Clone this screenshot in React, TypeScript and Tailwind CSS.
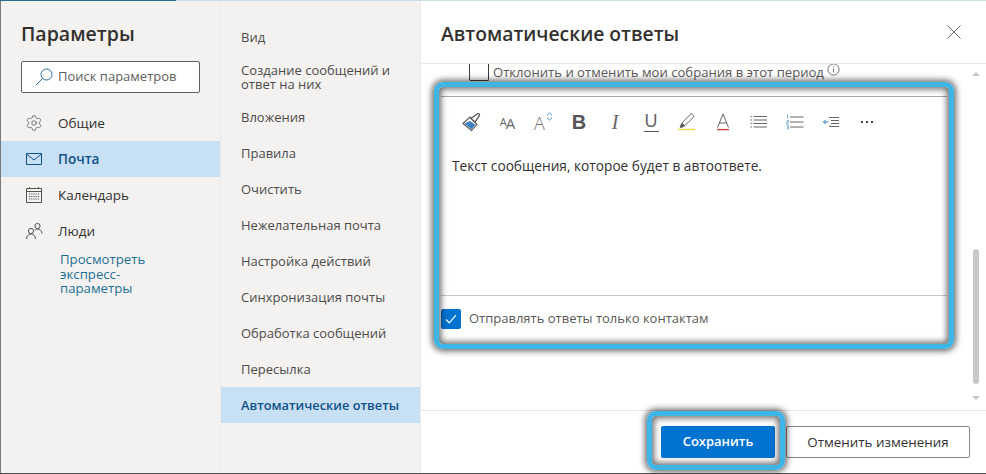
import React from "react";
import { Settings } from "lucide-react";

const F = "font-['Open_Sans','Noto_Sans',sans-serif]";

function Tool({ children }: { children: React.ReactNode }) {
  return <div className="w-[36px] h-[36px] flex items-center justify-center shrink-0">{children}</div>;
}

const subItems = [
  "Вид",
  "Создание сообщений и ответ на них",
  "Вложения",
  "Правила",
  "Очистить",
  "Нежелательная почта",
  "Настройка действий",
  "Синхронизация почты",
  "Обработка сообщений",
  "Пересылка",
  "Автоматические ответы",
];

export default function App() {
  return (
    <div className={`${F} relative w-[986px] h-[474px] overflow-hidden flex flex-col bg-white text-[#323130]`}>
      <div className="flex h-[1px] shrink-0">
        <div className="w-[176px] bg-[#1f6f8f]" />
        <div className="flex-1 bg-[#c9dbe3]" />
      </div>
      <div className="flex flex-1 min-h-0 border-l border-[#77797b]">
        {/* Left nav */}
        <div className="w-[219px] shrink-0 bg-[#f3f2f1] flex flex-col">
          <div className="h-[104px] shrink-0 px-[20px]">
            <div className="text-[19.5px] font-semibold leading-[28px] pt-[19px] h-[60px] text-[#323130]">Параметры</div>
            <div className="w-[179px] h-[32px] bg-white border border-[#605e5c] rounded-[2px] flex items-center pl-[13px] gap-[5px]">
              <svg width="18" height="18" viewBox="0 0 18 18" fill="none" stroke="#2a6f9b" strokeWidth="1">
                <circle cx="11.500" cy="6.500" r="5.500" />
                <path d="M7.500 10.500 1 17" />
              </svg>
              <span className="text-[13px] text-[#605e5c]">Поиск параметров</span>
            </div>
          </div>
          <div className="h-[36px] flex items-center pl-[24px] gap-[15px]">
            <Settings size={18} strokeWidth={1} className="text-[#55534f]" />
            <span className="text-[13.5px]">Общие</span>
          </div>
          <div className="h-[36px] flex items-center pl-[24px] gap-[15px] bg-[#c7e0f4] text-[#11508a]">
            <svg width="18" height="18" viewBox="0 0 18 18" fill="none" stroke="currentColor" strokeWidth="1">
              <path d="M1.500 3.500h15v11h-15zM1.500 4l7.500 6 7.500-6" />
            </svg>
            <span className="text-[13.5px] font-semibold">Почта</span>
          </div>
          <div className="h-[36px] flex items-center pl-[24px] gap-[15px]">
            <svg width="18" height="18" viewBox="0 0 18 18" fill="none" stroke="#55534f" strokeWidth="1">
              <path d="M1.500 2.500h15v14h-15zM1.500 5.500h15" />
              <path d="M4.500 1v2M13.500 1v2" />
              <path d="M4 8h10M4 10.500h10M4 13h10" strokeDasharray="1.200 1" />
            </svg>
            <span className="text-[13.5px]">Календарь</span>
          </div>
          <div className="h-[36px] flex items-center pl-[24px] gap-[15px]">
            <svg width="18" height="18" viewBox="0 0 18 18" fill="none" stroke="#55534f" strokeWidth="1">
              <circle cx="6" cy="9" r="2.600" />
              <path d="M1.500 17c0-3 2-5 4.500-5s4.500 2 4.500 5" />
              <circle cx="12.500" cy="4" r="2.600" />
              <path d="M10 8.500c.7-1 1.500-1.500 2.500-1.500 2.500 0 4.500 2 4.500 4.500" />
            </svg>
            <span className="text-[13.5px]">Люди</span>
          </div>
          <div className="pl-[59px] text-[13.2px] leading-[14.5px] text-[#1c6f92] pt-[3px]">
            Просмотреть<br />экспресс-<br />параметры
          </div>
        </div>

        {/* Sub nav */}
        <div className="w-[201px] shrink-0 bg-[#f3f2f1] border-l border-[#ebeae9] border-r flex flex-col pt-[18px]">
          {subItems.map((t, i) =>
            i === 1 ? (
              <div key={t} className="h-[44px] px-[20px] text-[13px] leading-[14.5px] flex items-center text-[#4d4b49]">
                <span>Создание сообщений и<br />ответ на них</span>
              </div>
            ) : (
              <div
                key={t}
                className={`h-[36px] px-[20px] pt-[1px] flex items-center whitespace-nowrap ${
                  i === 10 ? "bg-[#c7e0f4] text-[#11508a] font-semibold text-[12.8px]" : "text-[#4d4b49] text-[13px]"
                }`}
              >
                {t}
              </div>
            )
          )}
        </div>

        {/* Right pane */}
        <div className="flex-1 min-w-0 flex flex-col bg-white">
          <div className="h-[63px] shrink-0 border-b border-[#e6e6e6] flex items-start justify-between pl-[20px] pr-[25px]">
            <div className="text-[19.3px] font-semibold leading-[28px] pt-[19px] text-[#323130]">Автоматические ответы</div>
            <svg width="14" height="14" viewBox="0 0 14 14" className="mt-[24px]" fill="none" stroke="#666" strokeWidth="1">
              <path d="M.5.5l13 13M13.500.5l-13 13" />
            </svg>
          </div>

          <div className="flex-1 min-h-0 flex overflow-hidden">
            <div className="flex-1 min-w-0 flex flex-col">
              <div className="h-[32px] shrink-0 flex items-start pl-[48px]">
                <div className="w-[20px] h-[17px] border-x border-b border-[#3a3a3a] rounded-b-[2px]" />
                <span className="text-[13.100px] leading-[16px] ml-[4px] text-[#5b5957]">Отклонить и отменить мои собрания в этот период</span>
                <svg width="13" height="13" viewBox="0 0 13 13" className="ml-[3px] -mt-[1px] text-[#666]" fill="none" stroke="currentColor" strokeWidth="0.9">
                  <circle cx="6.500" cy="6.500" r="5.600" />
                  <path d="M6.500 5.500v4M6.500 3.200v1" />
                </svg>
              </div>
              <div className="ml-[20px] w-[506px] h-[199px] shrink-0 border-t border-[#a6a6a6] flex flex-col">
                <div className="h-[48px] pl-[12px] flex items-center mt-[1px] shrink-0">
                  <Tool>
                    <svg width="20" height="20" viewBox="0 0 20 20" fill="none" className="translate-x-[1px]">
                      <path d="M1 11.500 8 5l7 7.500-5.500 6z" fill="#fff" stroke="#55534f" strokeWidth="1.100" />
                      <path d="M2.500 11.500 8 9l5.500 3.800-4 4.400z" fill="#3f7fbe" />
                      <path d="M9 6.500 15.500 1.800c1-.7 2.500.7 1.900 1.800L13 10z" fill="#fff" stroke="#55534f" strokeWidth="1.200" />
                    </svg>
                  </Tool>
                  <Tool>
                    <span className="text-[#666] text-[15px] leading-none relative top-[1px] tracking-[-1px]"><span className="text-[11px] relative -top-[3px]">A</span>A</span>
                  </Tool>
                  <Tool>
                    <div className="relative w-[20px] h-[20px]">
                      <span className="absolute left-[1px] top-0 text-[#777] text-[18px] leading-[22px] font-light">A</span>
                      <svg width="7" height="9" viewBox="0 0 7 9" className="absolute right-0 top-0" fill="none" stroke="#3a86c8" strokeWidth="0.9">
                        <path d="M1 3.200 3.500 1 6 3.200M1 5.800 3.500 8 6 5.800" />
                      </svg>
                    </div>
                  </Tool>
                  <Tool>
                    <span className="font-['Liberation_Sans',sans-serif] font-bold text-[20px] leading-none text-[#555]">B</span>
                  </Tool>
                  <Tool>
                    <span className="font-['Liberation_Serif',serif] italic text-[20px] leading-none text-[#666]">I</span>
                  </Tool>
                  <Tool>
                    <span className="font-['Liberation_Sans',sans-serif] text-[18px] leading-[19px] text-[#666] border-b border-[#555] px-[1px]">U</span>
                  </Tool>
                  <Tool>
                    <svg width="20" height="20" viewBox="0 0 20 20" fill="none">
                      <path d="M3 15 5 11 13 2.500c.8-.8 2-.8 3 .2s.9 2 .2 2.800L8 13.500 4.500 15.500z" stroke="#666" strokeWidth="1" fill="#fff" />
                      <path d="M3 15.500 5 11l3 2.500-3.500 2z" fill="#555" />
                      <path d="M1 17.500h17" stroke="#f0d858" strokeWidth="1.500" />
                    </svg>
                  </Tool>
                  <Tool>
                    <svg width="20" height="20" viewBox="0 0 20 20" fill="none">
                      <path d="M4.500 15.500 10 2l5.500 13.500M6.300 11h7.400" stroke="#666" strokeWidth="1" />
                      <path d="M4 17.600h12" stroke="#c8453a" strokeWidth="1.400" />
                    </svg>
                  </Tool>
                  <Tool>
                    <svg width="18" height="16" viewBox="0 0 18 16" fill="none" stroke="#666" strokeWidth="1">
                      <path d="M3.500 2.500h13.500M3.500 6h13.500M3.500 9.500h13.500M3.500 13h13.500" />
                      <path d="M.5 2.500h1.400M.5 6h1.400M.5 9.500h1.400M.5 13h1.400" />
                    </svg>
                  </Tool>
                  <Tool>
                    <svg width="18" height="16" viewBox="0 0 18 16" fill="none" stroke="#666" strokeWidth="1">
                      <path d="M4 3h13.500M4 8h13.500M4 13h13.500" />
                      <path d="M1.500 .8v3.800M.6 6.600h1.800v1.600H.6v1.400h1.800M.6 11.200h1.800v3.600H.6M.8 13h1.600" stroke="#5c9bc9" strokeWidth="0.8" />
                    </svg>
                  </Tool>
                  <Tool>
                    <svg width="18" height="14" viewBox="0 0 18 14" fill="none" strokeWidth="1">
                      <path d="M7 2.500h10M9 5.500H17M9 8.500H17M7 11.500H17" stroke="#666" />
                      <path d="M6.500 7H1.500M3.500 5 1.500 7l2 2" stroke="#2b7cbd" />
                    </svg>
                  </Tool>
                  <Tool>
                    <div className="flex gap-[3px]">
                      <div className="w-[2px] h-[2px] bg-[#444]" />
                      <div className="w-[2px] h-[2px] bg-[#444]" />
                      <div className="w-[2px] h-[2px] bg-[#444]" />
                    </div>
                  </Tool>
                </div>
                <div className="flex-1 pl-[11px] pt-[10px] text-[13.700px] leading-[20px] text-[#323130]">
                  Текст сообщения, которое будет в автоответе.
                </div>
              </div>
              <div className="ml-[20px] w-[506px] border-t border-[#c8c8c8] shrink-0 pt-[13px] flex items-center">
                <div className="w-[20px] h-[20px] rounded-[2px] bg-[#0072d0] flex items-center justify-center">
                  <svg width="12" height="10" viewBox="0 0 12 10" fill="none" stroke="#fff" strokeWidth="1.200">
                    <path d="M1 5.500 4.300 8.800 11 1.200" />
                  </svg>
                </div>
                <span className="ml-[8px] text-[13px] text-[#5b5957]">Отправлять ответы только контактам</span>
              </div>
            </div>
            {/* Scrollbar */}
            <div className="w-[14px] mr-[3px] shrink-0 relative flex flex-col items-center">
              <div className="mt-[8px] w-0 h-0 border-x-[4px] border-x-transparent border-b-[4px] border-b-[#c8c8c8]" />
              <div className="mt-[173px] w-[6px] h-[135px] rounded-[3px] bg-[#c8c8c8]" />
              <div className="mt-[12px] w-0 h-0 border-x-[4px] border-x-transparent border-t-[4px] border-t-[#c8c8c8]" />
            </div>
          </div>

          <div className="h-[63px] shrink-0 border-t border-[#e6e6e6] flex items-start justify-end pr-[16px] pt-[15px] gap-[11px]">
            <button className="w-[114px] h-[32px] bg-[#0072d0] rounded-[2px] text-white text-[13px] font-semibold">Сохранить</button>
            <button className="w-[184px] h-[32px] bg-white border border-[#8a8886] rounded-[2px] text-[13.400px] text-[#323130]">Отменить изменения</button>
          </div>
        </div>
      </div>
      <div className="h-[1px] bg-[#555] shrink-0" />

      {/* Annotation highlights */}
      <div className="absolute left-[434px] top-[82px] w-[520px] h-[267px] border-[5px] border-[#3fb4e6] rounded-[9px] shadow-[0_0_6px_2px_rgba(0,0,0,0.6),inset_0_0_6px_2px_rgba(0,0,0,0.6)]" />
      <div className="absolute left-[647px] top-[411px] w-[138px] h-[59px] border-[5px] border-[#3fb4e6] rounded-[9px] shadow-[0_0_6px_2px_rgba(0,0,0,0.6),inset_0_0_6px_2px_rgba(0,0,0,0.6)]" />
    </div>
  );
}
